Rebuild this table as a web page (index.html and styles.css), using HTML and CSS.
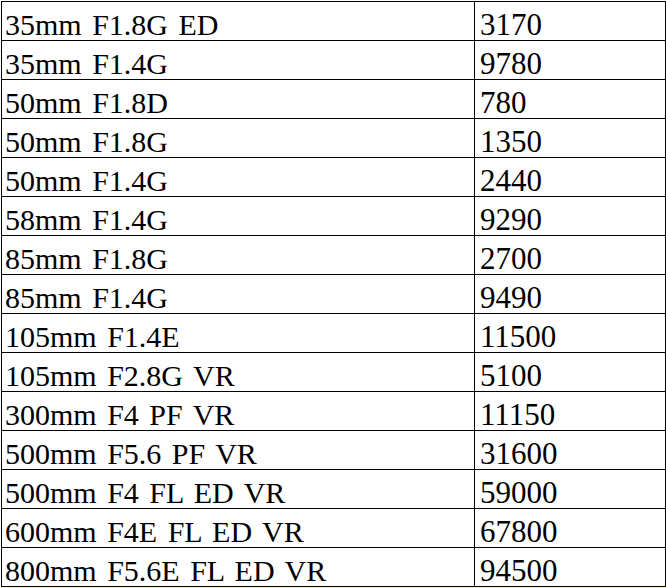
FILE: index.html
```html
<!DOCTYPE html>
<html>
<head>
<meta charset="utf-8">
<link rel="stylesheet" href="styles.css">
</head>
<body>
<div class="sheet">
  <div class="grid">
    <div class="cell name">35mm F1.8G ED</div><div class="cell price">3170</div>
    <div class="cell name">35mm F1.4G</div><div class="cell price">9780</div>
    <div class="cell name">50mm F1.8D</div><div class="cell price">780</div>
    <div class="cell name">50mm F1.8G</div><div class="cell price">1350</div>
    <div class="cell name">50mm F1.4G</div><div class="cell price">2440</div>
    <div class="cell name">58mm F1.4G</div><div class="cell price">9290</div>
    <div class="cell name">85mm F1.8G</div><div class="cell price">2700</div>
    <div class="cell name">85mm F1.4G</div><div class="cell price">9490</div>
    <div class="cell name">105mm F1.4E</div><div class="cell price">11500</div>
    <div class="cell name">105mm F2.8G VR</div><div class="cell price">5100</div>
    <div class="cell name">300mm F4 PF VR</div><div class="cell price">11150</div>
    <div class="cell name">500mm F5.6 PF VR</div><div class="cell price">31600</div>
    <div class="cell name">500mm F4 FL ED VR</div><div class="cell price">59000</div>
    <div class="cell name">600mm F4E FL ED VR</div><div class="cell price">67800</div>
    <div class="cell name">800mm F5.6E FL ED VR</div><div class="cell price">94500</div>
  </div>
  <div class="strip"></div>
</div>
</body>
</html>
```

FILE: styles.css
```css
html, body {
  margin: 0;
  padding: 0;
  background: #ffffff;
}
.sheet {
  padding: 1px 0 0 1px;
  width: 665px;
}
.grid {
  display: grid;
  grid-template-columns: 473px 191px;
  grid-auto-rows: 39px;
  border-top: 1px solid #000;
  border-left: 1px solid #000;
}
.cell {
  border-right: 1px solid #000;
  border-bottom: 1px solid #000;
  font-family: "Liberation Serif", "Times New Roman", serif;
  color: #000;
  padding: 7px 0 0 3px;
  line-height: 31px;
  white-space: pre;
  overflow: hidden;
}
.name {
  font-size: 30px;
  word-spacing: 3px;
}
.price {
  font-size: 31px;
  padding-left: 5px;
}
.strip {
  height: 2px;
  margin-left: -1px;
  background: #f4f4b8;
}
```
